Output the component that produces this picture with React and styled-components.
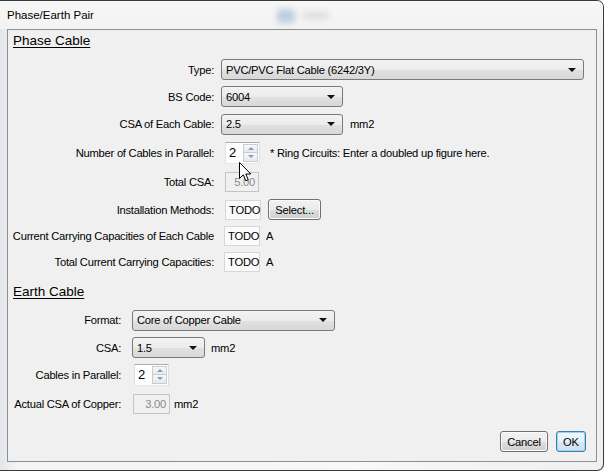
import React from "react";
import styled, { createGlobalStyle } from "styled-components";

const GlobalStyle = createGlobalStyle`
  body {
    margin: 0;
    font-family: "Liberation Sans", Arial, sans-serif;
    background: #fff;
  }
`;

const Window = styled.div`
  width: 604px;
  height: 471px;
  box-sizing: border-box;
  border: 1px solid #3a3a3a;
  border-left: none;
  border-radius: 0 7px 7px 0;
  background: linear-gradient(90deg, #e4e7ea 0%, #f3f4f5 3%, #f7f8f8 60%, #eef0f1 100%);
  display: flex;
  flex-direction: column;
  position: relative;
  overflow: hidden;
`;

const TitleBar = styled.div`
  height: 28px;
  padding-left: 7px;
  display: flex;
  align-items: center;
  font-size: 11.5px;
  color: #000;
  position: relative;
  background: linear-gradient(180deg, #f7f7f7 0%, #f3f3f3 100%);
`;

const GlassBlob = styled.div`
  position: absolute;
  top: ${(p) => p.$top}px;
  left: ${(p) => p.$left}px;
  width: ${(p) => p.$w}px;
  height: ${(p) => p.$h}px;
  background: ${(p) => p.$color};
  border-radius: 4px;
  filter: blur(3px);
`;

const Client = styled.div`
  flex: 1;
  margin: 0 6px 8px 7px;
  border: 1px solid #8e8f8f;
  background: #f0f0f0;
  display: flex;
  flex-direction: column;
  padding-top: 2px;
  font-size: 11.2px;
  letter-spacing: -0.25px;
  color: #000;
`;

const SectionTitle = styled.div`
  font-size: 13.5px;
  letter-spacing: 0;
  height: 18px;
  line-height: 18px;
  padding-left: 5px;
  margin-top: ${(p) => p.$top || 0}px;
  text-decoration: underline;
  text-underline-offset: 2px;
`;

const FormGrid = styled.div`
  display: grid;
  grid-template-columns: ${(p) => p.$label}px 1fr;
  grid-template-rows: ${(p) => p.$rows};
  column-gap: ${(p) => p.$gap}px;
  margin-top: ${(p) => p.$top}px;
`;

const Label = styled.div`
  text-align: right;
  align-self: center;
  white-space: nowrap;
  line-height: 14px;
`;

const Field = styled.div`
  display: flex;
  align-items: center;
  gap: ${(p) => p.$gap ?? 7}px;
  margin-left: ${(p) => p.$shift || 0}px;
  white-space: nowrap;
`;

const Combo = styled.div`
  width: ${(p) => p.$w}px;
  height: 21px;
  box-sizing: border-box;
  border: 1px solid #7a7a7a;
  border-radius: 3px;
  background: linear-gradient(180deg, #f3f3f3 0%, #ececec 50%, #e1e1e1 51%, #d8d8d8 100%);
  display: flex;
  align-items: center;
  justify-content: space-between;
  padding: 0 7px 0 4px;
`;

const Arrow = styled.span`
  width: 0;
  height: 0;
  border-left: 4px solid transparent;
  border-right: 4px solid transparent;
  border-top: 4px solid #111;
`;

const Spin = styled.div`
  width: 35px;
  height: 22px;
  box-sizing: border-box;
  border: 1px solid #abadb3;
  border-left-color: #dbdfe6;
  border-right-color: #dbdfe6;
  border-bottom-color: #e3e9ef;
  background: #fff;
  display: flex;
`;

const SpinValue = styled.div`
  flex: 1;
  padding-left: 3px;
  line-height: 20px;
  font-size: 13px;
`;

const SpinButtons = styled.div`
  width: 15px;
  display: flex;
  flex-direction: column;
  padding: 1px 1px 1px 0;
`;

const SpinHalf = styled.div`
  flex: 1;
  border: 1px solid #c9ccd3;
  background: linear-gradient(180deg, #f7f8fa, #e6e9ee);
  display: flex;
  align-items: center;
  justify-content: center;
  ${(p) => (p.$down ? "border-top: none;" : "")}
`;

const TinyArrow = styled.span`
  width: 0;
  height: 0;
  border-left: 3px solid transparent;
  border-right: 3px solid transparent;
  ${(p) =>
    p.$down ? "border-top: 3px solid #8a97ac;" : "border-bottom: 3px solid #8a97ac;"}
`;

const InfoBox = styled.div`
  width: 36px;
  height: 20px;
  box-sizing: border-box;
  border: 1px solid #d7d7d7;
  background: #fafafa;
  display: flex;
  align-items: center;
  padding-left: 3px;
  letter-spacing: -0.2px;
`;

const ReadOnly = styled.div`
  width: ${(p) => p.$w}px;
  height: 20px;
  box-sizing: border-box;
  border: 1px solid #c4c4c4;
  background: #f0f0f0;
  color: #8a8a8a;
  text-align: right;
  padding-right: 3px;
  line-height: 18px;
`;

const Button = styled.button`
  height: 21px;
  width: ${(p) => p.$w}px;
  box-sizing: border-box;
  padding: 0;
  font-family: inherit;
  font-size: 11.2px;
  letter-spacing: -0.2px;
  color: #000;
  border: 1px solid ${(p) => (p.$primary ? "#3c7fb1" : "#707070")};
  border-radius: 3px;
  background: ${(p) =>
    p.$primary
      ? "linear-gradient(180deg, #f2f8fc 0%, #e6f1f9 50%, #d9e8f3 51%, #cfe1ef 100%)"
      : "linear-gradient(180deg, #f2f2f2 0%, #ebebeb 50%, #dddddd 51%, #cfcfcf 100%)"};
  box-shadow: ${(p) => (p.$primary ? "inset 0 0 0 1px #9fd3f5" : "inset 0 0 0 1px #fbfbfb")};
`;

const Footer = styled.div`
  margin-top: auto;
  display: flex;
  justify-content: flex-end;
  gap: 8px;
  padding: 0 10px 9px 0;
`;

const Cursor = styled.svg`
  position: absolute;
  left: 239px;
  top: 161px;
`;

const ComboBox = ({ w, value }) => (
  <Combo $w={w}>
    <span>{value}</span>
    <Arrow />
  </Combo>
);

const Spinner = ({ value }) => (
  <Spin>
    <SpinValue>{value}</SpinValue>
    <SpinButtons>
      <SpinHalf>
        <TinyArrow />
      </SpinHalf>
      <SpinHalf $down>
        <TinyArrow $down />
      </SpinHalf>
    </SpinButtons>
  </Spin>
);

export default function App() {
  return (
    <>
      <GlobalStyle />
      <Window>
        <TitleBar>
          Phase/Earth Pair
          <GlassBlob $top={8} $left={277} $w={18} $h={14} $color="#bccde0" />
          <GlassBlob $top={11} $left={303} $w={26} $h={7} $color="#dcdcdc" />
        </TitleBar>
        <Client>
          <SectionTitle>Phase Cable</SectionTitle>
          <FormGrid $label={206} $gap={7} $top={6} $rows="27px 27px 28px 29px 29px 27px 26px 26px">
            <Label>Type:</Label>
            <Field>
              <ComboBox w={363} value="PVC/PVC Flat Cable (6242/3Y)" />
            </Field>
            <Label>BS Code:</Label>
            <Field>
              <ComboBox w={122} value="6004" />
            </Field>
            <Label>CSA of Each Cable:</Label>
            <Field>
              <ComboBox w={122} value="2.5" />
              <span>mm2</span>
            </Field>
            <Label>Number of Cables in Parallel:</Label>
            <Field $shift={4} $gap={10}>
              <Spinner value="2" />
              <span>* Ring Circuits: Enter a doubled up figure here.</span>
            </Field>
            <Label>Total CSA:</Label>
            <Field $shift={4}>
              <ReadOnly $w={34}>5.00</ReadOnly>
            </Field>
            <Label>Installation Methods:</Label>
            <Field $shift={4}>
              <InfoBox>TODO</InfoBox>
              <Button $w={53}>Select...</Button>
            </Field>
            <Label>Current Carrying Capacities of Each Cable</Label>
            <Field $shift={3} $gap={6}>
              <InfoBox>TODO</InfoBox>
              <span>A</span>
            </Field>
            <Label>Total Current Carrying Capacities:</Label>
            <Field $shift={3} $gap={6}>
              <InfoBox>TODO</InfoBox>
              <span>A</span>
            </Field>
          </FormGrid>

          <SectionTitle $top={8}>Earth Cable</SectionTitle>
          <FormGrid $label={113} $gap={11} $top={5} $rows="28px 27px 27px 32px">
            <Label>Format:</Label>
            <Field>
              <ComboBox w={203} value="Core of Copper Cable" />
            </Field>
            <Label>CSA:</Label>
            <Field $gap={6}>
              <ComboBox w={73} value="1.5" />
              <span>mm2</span>
            </Field>
            <Label>Cables in Parallel:</Label>
            <Field $shift={2}>
              <Spinner value="2" />
            </Field>
            <Label>Actual CSA of Copper:</Label>
            <Field $shift={1} $gap={4}>
              <ReadOnly $w={37}>3.00</ReadOnly>
              <span>mm2</span>
            </Field>
          </FormGrid>

          <Footer>
            <Button $w={48}>Cancel</Button>
            <Button $w={30} $primary>
              OK
            </Button>
          </Footer>
        </Client>
        <Cursor width="13" height="21" viewBox="0 0 13 21">
          <path
            d="M0.5 0.5 L0.5 16.5 L4.3 12.8 L6.8 18.8 L9.2 17.8 L6.8 12 L11.8 12 Z"
            fill="#fff"
            stroke="#000"
            strokeWidth="1"
            strokeLinejoin="round"
          />
        </Cursor>
      </Window>
    </>
  );
}
